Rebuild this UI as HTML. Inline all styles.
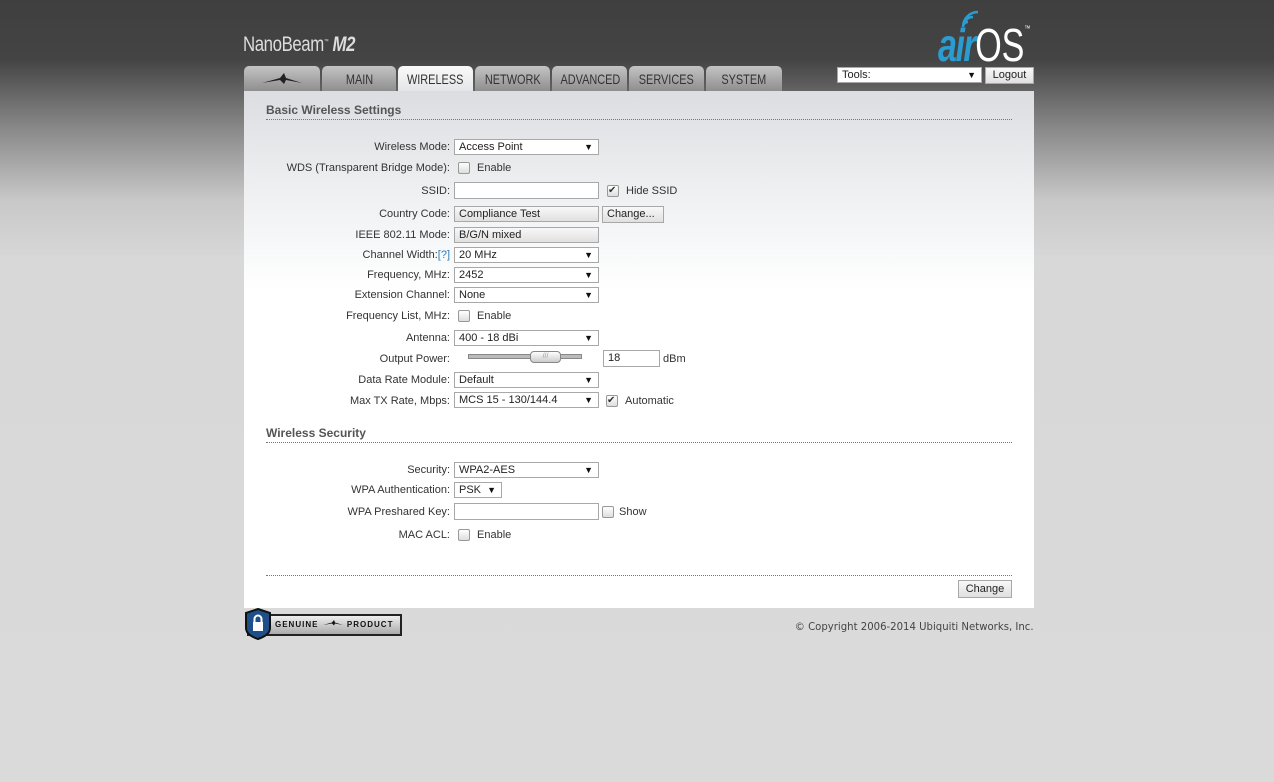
<!DOCTYPE html>
<html><head><meta charset="utf-8"><style>
*{box-sizing:border-box;margin:0;padding:0}
body{width:1274px;height:782px;position:relative;overflow:hidden;font-family:"Liberation Sans",Arial,sans-serif;font-size:11px;color:#333;
background:linear-gradient(#3f3f3f 0px,#444 60px,#8a8a8a 130px,#c8c8c8 200px,#d8d8d8 260px,#dadada 782px)}
.a{position:absolute}
.panel{left:244px;top:91px;width:790px;height:517px;background:linear-gradient(#dcdde1 0px,#eceef0 90px,#fff 200px,#fff)}
.tab{top:66px;height:25px;background:linear-gradient(#c4c4c4,#8e8e8e);border-radius:5px 5px 0 0;color:#333;font-size:14px;text-align:center;line-height:26px;overflow:hidden}
.tab span{display:inline-block;transform:scaleX(.78)}
.tab.on{background:linear-gradient(#fafafa,#e4e5e8);}
.lbl{right:824px;text-align:right;color:#333;font-size:11px;white-space:nowrap}
.sel,.inp,.btn{height:16px;border:1px solid #a8a8a8;background:#fff;font-size:11px;line-height:14px;padding-left:4px;color:#222}
.sel:after{content:"▼";position:absolute;right:5px;top:0;font-size:9px;color:#111}
.btn{background:linear-gradient(#f8f8f8,#e0e0e0);}
.cb{width:12px;height:12px;border:1px solid #999;border-radius:2px;background:linear-gradient(#fff,#ddd)}
.sec{left:266px;width:746px;font-weight:bold;font-size:12px;color:#555;border-bottom:1px dotted #777;padding-bottom:2px}
</style></head><body>
<div class="a" style="left:243px;top:33px;color:#ddd;font-size:21px;letter-spacing:-0.5px;transform:scaleX(.8);transform-origin:left;white-space:nowrap">NanoBeam<sup style="font-size:6px">™</sup> <i style="font-weight:bold">M2</i></div>
<div class="a" style="left:938px;top:6px;font-size:46px;line-height:46px;white-space:nowrap;transform:scaleX(.74);transform-origin:left"><i style="color:#2a9cd0;font-weight:bold;letter-spacing:-2px">air</i><span style="color:#fff">OS</span><sup style="font-size:8px;color:#fff;vertical-align:30px">™</sup></div>
<svg class="a" style="left:960px;top:10px" width="22" height="18"><path d="M3 17a5 5 0 0 1 5-5M3 17a10 10 0 0 1 10-10M3 17a15 15 0 0 1 15-15" stroke="#2a9cd0" stroke-width="2.5" fill="none"/></svg>
<div class="a sel" style="left:837px;top:67px;width:145px;height:16px">Tools:</div>
<div class="a btn" style="left:985px;top:67px;width:49px;height:17px;text-align:center;padding:0">Logout</div>
<div class="a tab" style="left:244px;width:76px"><svg width="44" height="14" viewBox="0 0 44 14" style="margin-top:6px"><path d="M2 11 L20 6 L24 1 L26 6 L42 11 L26 8 L24 12 L20 8Z" fill="#222"/></svg></div>
<div class="a tab" style="left:322px;width:74px"><span>MAIN</span></div>
<div class="a tab on" style="left:398px;width:75px"><span>WIRELESS</span></div>
<div class="a tab" style="left:475px;width:75px"><span>NETWORK</span></div>
<div class="a tab" style="left:552px;width:75px"><span>ADVANCED</span></div>
<div class="a tab" style="left:629px;width:75px"><span>SERVICES</span></div>
<div class="a tab" style="left:706px;width:76px"><span>SYSTEM</span></div>
<div class="a panel"></div>
<div class="a sec" style="top:103px">Basic Wireless Settings</div>

<div class="a lbl" style="top:141px">Wireless Mode:</div><div class="a sel" style="left:454px;top:139px;width:145px">Access Point</div>
<div class="a lbl" style="top:162px">WDS (Transparent Bridge Mode):</div><div class="a cb" style="left:458px;top:162px"></div><div class="a" style="left:477px;top:162px">Enable</div>
<div class="a lbl" style="top:185px">SSID:</div><div class="a inp" style="left:454px;top:182px;width:145px;height:17px"></div><div class="a cb" style="left:607px;top:185px;font-size:10px;line-height:10px">✔</div><div class="a" style="left:626px;top:185px">Hide SSID</div>
<div class="a lbl" style="top:208px">Country Code:</div><div class="a btn" style="left:454px;top:206px;width:145px">Compliance Test</div><div class="a btn" style="left:602px;top:206px;width:62px;height:17px">Change...</div>
<div class="a lbl" style="top:229px">IEEE 802.11 Mode:</div><div class="a btn" style="left:454px;top:227px;width:145px">B/G/N mixed</div>
<div class="a lbl" style="top:249px">Channel Width:<span style="color:#2a7cc0">[?]</span></div><div class="a sel" style="left:454px;top:247px;width:145px">20 MHz</div>
<div class="a lbl" style="top:269px">Frequency, MHz:</div><div class="a sel" style="left:454px;top:267px;width:145px">2452</div>
<div class="a lbl" style="top:289px">Extension Channel:</div><div class="a sel" style="left:454px;top:287px;width:145px">None</div>
<div class="a lbl" style="top:310px">Frequency List, MHz:</div><div class="a cb" style="left:458px;top:310px"></div><div class="a" style="left:477px;top:310px">Enable</div>
<div class="a lbl" style="top:332px">Antenna:</div><div class="a sel" style="left:454px;top:330px;width:145px">400 - 18 dBi</div>
<div class="a lbl" style="top:353px">Output Power:</div>
<div class="a" style="left:468px;top:354px;width:114px;height:5px;background:#bbb;border:1px solid #888"></div>
<div class="a" style="left:530px;top:351px;width:31px;height:12px;border:1px solid #888;border-radius:4px;background:linear-gradient(#fff,#ccc);font-size:7px;color:#999;text-align:center;line-height:10px">///</div>
<div class="a inp" style="left:603px;top:350px;width:57px;height:17px">18</div><div class="a" style="left:663px;top:353px">dBm</div>
<div class="a lbl" style="top:374px">Data Rate Module:</div><div class="a sel" style="left:454px;top:372px;width:145px">Default</div>
<div class="a lbl" style="top:395px">Max TX Rate, Mbps:</div><div class="a sel" style="left:454px;top:392px;width:145px">MCS 15 - 130/144.4</div><div class="a cb" style="left:606px;top:395px;font-size:10px;line-height:10px">✔</div><div class="a" style="left:625px;top:395px">Automatic</div>

<div class="a sec" style="top:426px">Wireless Security</div>
<div class="a lbl" style="top:464px">Security:</div><div class="a sel" style="left:454px;top:462px;width:145px">WPA2-AES</div>
<div class="a lbl" style="top:484px">WPA Authentication:</div><div class="a sel" style="left:454px;top:482px;width:48px">PSK</div>
<div class="a lbl" style="top:506px">WPA Preshared Key:</div><div class="a inp" style="left:454px;top:503px;width:145px;height:17px"></div><div class="a cb" style="left:602px;top:506px"></div><div class="a" style="left:619px;top:506px">Show</div>
<div class="a lbl" style="top:529px">MAC ACL:</div><div class="a cb" style="left:458px;top:529px"></div><div class="a" style="left:477px;top:529px">Enable</div>
<div class="a" style="left:266px;top:575px;width:746px;border-top:1px dotted #777"></div>
<div class="a btn" style="left:958px;top:580px;width:54px;height:18px;text-align:center;padding:0;line-height:16px">Change</div>

<div class="a" style="left:247px;top:614px;width:155px;height:22px;border:2px solid #222;background:linear-gradient(#eee,#aaa);font-size:8px;font-weight:bold;letter-spacing:1px;line-height:18px;padding-left:26px;color:#111;white-space:nowrap">GENUINE <svg width="22" height="8" viewBox="0 0 44 14"><path d="M2 11 L20 6 L24 1 L26 6 L42 11 L26 8 L24 12 L20 8Z" fill="#111"/></svg> PRODUCT</div>
<svg class="a" style="left:244px;top:608px" width="28" height="32"><path d="M14 1 L26 5 L26 20 Q26 27 14 31 Q2 27 2 20 L2 5Z" fill="#1f4f8a" stroke="#111" stroke-width="2"/><rect x="9" y="14" width="10" height="9" fill="#fff"/><path d="M10.5 14v-3a3.5 3.5 0 0 1 7 0v3" stroke="#fff" stroke-width="2" fill="none"/></svg>
<div class="a" style="right:240px;top:620px;font-size:11px;color:#444;font-family:'DejaVu Sans',sans-serif;transform:scaleX(.92);transform-origin:right;white-space:nowrap">© Copyright 2006-2014 Ubiquiti Networks, Inc.</div>
</body></html>
